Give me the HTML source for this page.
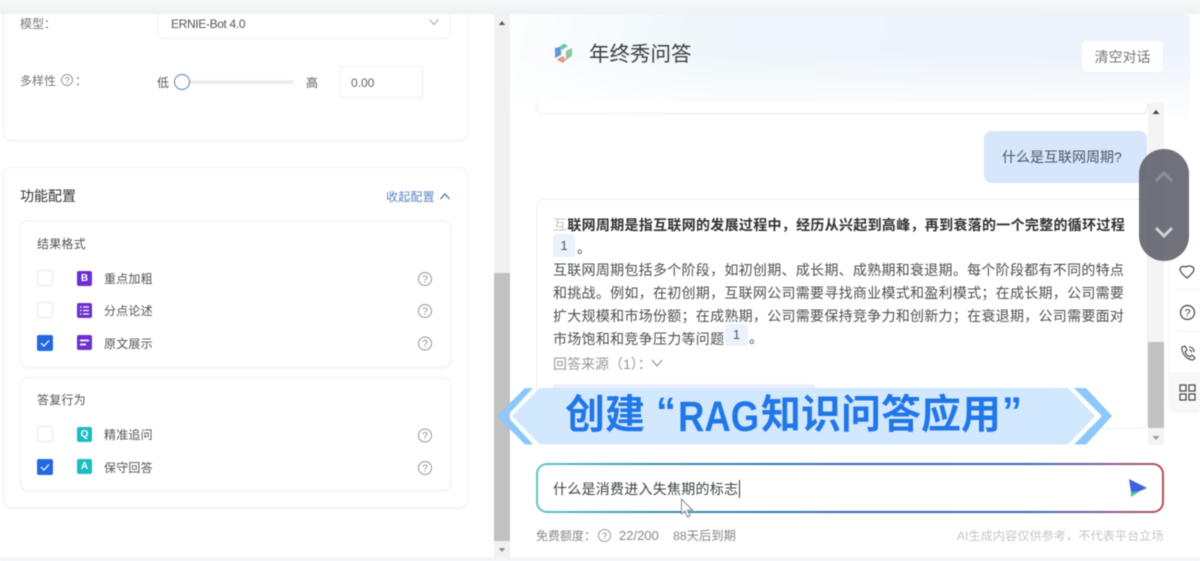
<!DOCTYPE html>
<html><head><meta charset="utf-8"><style>
html,body{margin:0;padding:0;background:#fff}
body{width:1200px;height:561px;overflow:hidden;position:relative;background:#fff;font-family:"Liberation Sans","Noto Sans CJK SC",sans-serif;color:#555}
#w{position:absolute;left:0;top:0;width:1200px;height:561px;overflow:hidden;filter:blur(.4px)}
.a{position:absolute}
.t{position:absolute;white-space:nowrap;line-height:20px}
.card{position:absolute;background:#fff;border:1px solid #eef0f2;border-radius:8px;box-sizing:border-box;box-shadow:0 1px 2px rgba(0,0,0,.03)}
.cb{position:absolute;left:37px;width:16px;height:16px;box-sizing:border-box;border:1px solid #e8e8e8;border-radius:2px;background:#fff}
.cb.on{background:#2468e0;border-color:#2468e0}
.ic{position:absolute;left:77px;width:15px;height:15px;border-radius:2px;color:#fff;font-size:10px;font-weight:bold;line-height:15px;text-align:center}
.p{background:#6d2fd0}.g{background:#1ebcc0}
.l{font-size:12px;letter-spacing:.2px}
.b{position:absolute;white-space:nowrap;font-size:40px;line-height:52px;font-weight:bold;color:#2277e8}
</style></head><body><div id="w">

<div class="card" style="left:3px;top:-20px;width:465px;height:161px"></div>
<div class="a" style="left:0;top:0;width:1200px;height:14px;background:linear-gradient(180deg,#f6f7f8,#f1f2f4)"></div>
<div class="a" style="left:0;top:557px;width:1200px;height:4px;background:#f4f5f6"></div>
<div class="a" style="left:157px;top:14px;width:294px;height:25px;box-sizing:border-box;border:1px solid #eef0f2;border-top:0;border-radius:0 0 5px 5px;background:#fff"></div>
<div class="t" style="left:20px;top:14px;font-size:12px;color:#777">模型：</div>
<div class="t" style="left:171px;top:14px;font-size:12px;letter-spacing:-.35px;color:#555">ERNIE-Bot 4.0</div>
<svg class="a" style="left:428px;top:18px" width="12" height="9"><path d="M1.500 1.500L6 6.500L10.500 1.500" fill="none" stroke="#aaa" stroke-width="1"/></svg>
<div class="t" style="left:20px;top:71px;font-size:12px;color:#777">多样性</div>
<svg class="a" style="left:60px;top:73px" width="14" height="14"><circle cx="7" cy="7" r="5.500" fill="none" stroke="#999"/><text x="7" y="10.500" font-size="9" fill="#888" text-anchor="middle" font-family="Liberation Sans">?</text></svg>
<div class="t" style="left:75px;top:71px;font-size:12px;color:#777">：</div>
<div class="t" style="left:157px;top:73px;font-size:12px;color:#555">低</div>
<div class="a" style="left:182px;top:80px;width:112px;height:4px;border-radius:2px;background:#eceef0"></div>
<div class="a" style="left:174px;top:74px;width:16px;height:16px;box-sizing:border-box;border:1.500px solid #5b7cae;border-radius:50%;background:#fff"></div>
<div class="t" style="left:306px;top:73px;font-size:12px;color:#555">高</div>
<div class="a" style="left:339px;top:66px;width:84px;height:32px;box-sizing:border-box;border:1px solid #eceef0;border-radius:3px"></div>
<div class="t" style="left:351px;top:73px;font-size:12px;color:#666">0.00</div>

<div class="card" style="left:3px;top:167px;width:465px;height:341px"></div>
<div class="t" style="left:20px;top:186px;font-size:14px;color:#333">功能配置</div>
<div class="t" style="left:386px;top:187px;font-size:12px;letter-spacing:.2px;color:#5a84c4">收起配置</div>
<svg class="a" style="left:439px;top:192px" width="12" height="9"><path d="M1.500 7L6 2L10.500 7" fill="none" stroke="#4a74b4" stroke-width="1.300"/></svg>

<div class="card" style="left:20px;top:220px;width:431px;height:148px"></div>
<div class="t l" style="left:37px;top:234px;color:#555">结果格式</div>
<div class="cb" style="top:270px"></div><div class="ic p" style="top:271px">B</div><div class="t l" style="left:104px;top:269px">重点加粗</div>
<div class="cb" style="top:302px"></div>
<div class="ic p" style="top:303px"><svg width="15" height="15" style="display:block"><path d="M3 4h1.500M3 7.500h1.500M3 11h1.500M6 4h6M6 7.500h6M6 11h6" stroke="#fff" stroke-width="1.300"/></svg></div><div class="t l" style="left:104px;top:301px">分点论述</div>
<div class="cb on" style="top:335px"><svg width="14" height="14" style="display:block"><path d="M3 7l3 3l5-5.500" fill="none" stroke="#fff" stroke-width="1.200"/></svg></div>
<div class="ic p" style="top:335px"><svg width="15" height="15" style="display:block"><path d="M3 5.500h9M3 9.500h6" stroke="#fff" stroke-width="1.800"/></svg></div><div class="t l" style="left:104px;top:334px">原文展示</div>

<div class="card" style="left:20px;top:377px;width:431px;height:114px"></div>
<div class="t l" style="left:37px;top:390px;color:#555">答复行为</div>
<div class="cb" style="top:426px"></div><div class="ic g" style="top:427px">Q</div><div class="t l" style="left:104px;top:425px">精准追问</div>
<div class="cb on" style="top:459px"><svg width="14" height="14" style="display:block"><path d="M3 7l3 3l5-5.500" fill="none" stroke="#fff" stroke-width="1.200"/></svg></div>
<div class="ic g" style="top:459px">A</div><div class="t l" style="left:104px;top:458px">保守回答</div>

<svg class="a" style="left:417px;top:271px" width="16" height="205">
<g fill="none" stroke="#999"><circle cx="8" cy="8" r="6.500"/><circle cx="8" cy="40" r="6.500"/><circle cx="8" cy="72.500" r="6.500"/><circle cx="8" cy="164.500" r="6.500"/><circle cx="8" cy="197" r="6.500"/></g>
<g font-size="10" fill="#888" text-anchor="middle" font-family="Liberation Sans"><text x="8" y="11.500">?</text><text x="8" y="43.500">?</text><text x="8" y="76">?</text><text x="8" y="168">?</text><text x="8" y="200.500">?</text></g></svg>

<div class="a" style="left:494px;top:14px;width:16px;height:543px;background:#f1f1f1"></div>
<div class="a" style="left:494px;top:273px;width:16px;height:268px;background:#c1c1c1"></div>
<svg class="a" style="left:494px;top:14px" width="16" height="543"><path d="M5 11h6l-3-4z" fill="#555"/><path d="M5 534h6l-3 4z" fill="#888"/></svg>

<div class="a" style="left:510px;top:14px;width:690px;height:543px;background:#fff"></div>
<div class="a" style="left:510px;top:14px;width:680px;height:110px;background:linear-gradient(100deg,#fdfefe 0%,#eff7fb 28%,#edf4fc 70%,#eef3fd 100%);-webkit-mask-image:linear-gradient(180deg,#000 35%,transparent 100%);mask-image:linear-gradient(180deg,#000 35%,transparent 100%);border-radius:6px 6px 0 0"></div>

<svg class="a" style="left:553px;top:42px" width="21" height="22" viewBox="0 0 21 22">
<path d="M6 5L11 1.500L15 4L9 8z" fill="#6fc8a8"/>
<path d="M13 9L19 6V14L13 18z" fill="#8cc89c"/>
<path d="M2 6L7 5L8 8V13L2 16z" fill="#5f96e0"/>
<path d="M5 16.500L10 14L13 18L10 21L4 18z" fill="#e89a82"/></svg>
<div class="t" style="left:589px;top:43px;font-size:20.500px;line-height:24px;color:#3a3d42">年终秀问答</div>
<div class="a" style="left:1081px;top:40px;width:83px;height:33px;box-sizing:border-box;background:#fff;border:1px solid #f0f1f3;border-radius:5px;font-size:14px;line-height:32px;text-align:center;color:#777">清空对话</div>

<div class="a" style="left:536px;top:102px;width:612px;height:12px;box-sizing:border-box;background:#fff;border:1px solid #eceef1;border-top:0;border-radius:0 0 7px 7px"></div>

<div class="a" style="left:1148px;top:103px;width:16px;height:342px;background:#f4f4f4"></div>
<div class="a" style="left:1148px;top:342px;width:16px;height:86px;background:#c1c1c1"></div>
<svg class="a" style="left:1148px;top:103px" width="16" height="342"><path d="M4.500 11h7l-3.500-4z" fill="#444"/><path d="M4.500 333h7l-3.500 4z" fill="#999"/></svg>

<div class="a" style="left:984px;top:131px;width:163px;height:52px;background:#d7e6fb;border-radius:8px;font-size:14px;line-height:52px;box-sizing:border-box;padding-left:18px;color:#4b5563;white-space:nowrap">什么是互联网周期?</div>

<div class="a" style="left:536px;top:199px;width:612px;height:230px;box-sizing:border-box;background:#fff;border:1px solid #eceef1;border-radius:8px"></div>
<div class="t" style="left:553px;top:215px;font-size:14px;font-weight:bold;color:#2f3136;letter-spacing:.3px"><span style="color:#c4c6ca;font-weight:normal">互</span>联网周期是指互联网的发展过程中，经历从兴起到高峰，再到衰落的一个完整的循环过程</div>
<div class="a" style="left:553px;top:234px;width:22px;height:23px;background:#eaf2fc;border-radius:3px;font-size:13px;line-height:23px;text-align:center;color:#555">1</div>
<div class="t" style="left:577px;top:238px;font-size:14px;color:#444">。</div>
<div class="t" style="left:553px;top:259px;font-size:14px;line-height:23px;letter-spacing:.28px;color:#4c4f55">互联网周期包括多个阶段，如初创期、成长期、成熟期和衰退期。每个阶段都有不同的特点<br>和挑战。例如，在初创期，互联网公司需要寻找商业模式和盈利模式；在成长期，公司需要<br>扩大规模和市场份额；在成熟期，公司需要保持竞争力和创新力；在衰退期，公司需要面对<br>市场饱和和竞争压力等问题</div>
<div class="a" style="left:725px;top:324px;width:23px;height:22px;background:#eaf2fc;border-radius:3px;font-size:13px;line-height:22px;text-align:center;color:#555">1</div>
<div class="t" style="left:749px;top:328px;font-size:14px;color:#444">。</div>
<div class="t" style="left:553px;top:354px;font-size:14px;color:#999">回答来源（1）：</div>
<svg class="a" style="left:650px;top:358px" width="14" height="10"><path d="M2 2l5 6l5-6" fill="none" stroke="#888" stroke-width="1"/></svg>
<div class="a" style="left:553px;top:384px;width:262px;height:10px;background:#eceefb;border-radius:3px 3px 0 0"></div>

<svg class="a" style="left:490px;top:388px" width="630" height="57" viewBox="0 0 630 57">
<polygon points="35,0 43,0 17,28 43,56.500 35,56.500 7,28" fill="#8cc8fb"/>
<polygon points="50,0 578,0 605,28 578,56.500 50,56.500 22,28" fill="#d2e8fe"/>
<polygon points="584,0 596,0 622,28 596,56.500 584,56.500 612,28" fill="#8cc8fb"/>
</svg>
<div class="b" style="left:565px;top:389px">创建</div>
<div class="b" style="left:656px;top:386px">“</div>
<div class="b" style="left:678px;top:391px;font-size:43px;transform:scaleX(.85);transform-origin:0 50%">RAG</div>
<div class="b" style="left:761px;top:389px">知识问答应用</div>
<div class="b" style="left:1002px;top:386px">”</div>

<div class="a" style="left:536px;top:463px;width:628px;height:50px;box-sizing:border-box;border-radius:11px;padding:2px;background:linear-gradient(90deg,#62c7c0 0%,#3f8fb8 18%,#2f68b4 50%,#3567b8 78%,#8a5c92 92%,#b9504f 100%)"><div style="width:100%;height:100%;background:#fff;border-radius:9px"></div></div>
<div class="t" style="left:553px;top:479px;font-size:14px;letter-spacing:.25px;color:#3f4247">什么是消费进入失焦期的标志</div>
<div class="a" style="left:739px;top:480px;width:1px;height:18px;background:#333"></div>
<svg class="a" style="left:1127px;top:477px" width="22" height="22"><path d="M4 12L13 14L4 20z" fill="#45c0a0"/><path d="M2 2L20 11L13 14L4 15z" fill="#3f62e0"/></svg>
<svg class="a" style="left:680px;top:498px" width="16" height="22"><path d="M1.500 1v15l3.500-3l2.500 6l2.500-1l-2.500-6h5z" fill="#fff" stroke="#8a8a8a" stroke-width="1"/></svg>

<div class="t" style="left:536px;top:526px;font-size:12px;color:#888">免费额度：</div>
<svg class="a" style="left:597px;top:528px" width="15" height="15"><circle cx="7.500" cy="7.500" r="6" fill="none" stroke="#999"/><text x="7.500" y="11" font-size="9" fill="#888" text-anchor="middle" font-family="Liberation Sans">?</text></svg>
<div class="t" style="left:619px;top:526px;font-size:13px;color:#888">22/200</div>
<div class="t" style="left:673px;top:526px;font-size:12.300px;color:#888">88天后到期</div>
<div class="t" style="left:957px;top:526px;font-size:12.200px;color:#c4c6ca">AI生成内容仅供参考，不代表平台立场</div>

<div class="a" style="left:1170px;top:248px;width:30px;height:162px;background:#fff;border-radius:6px 0 0 6px;box-shadow:0 1px 5px rgba(0,0,0,.08)"></div>
<div class="a" style="left:1170px;top:372px;width:30px;height:38px;background:#f8f8f9;border-radius:0 0 0 6px"></div>
<div class="a" style="left:1177px;top:289px;width:23px;height:1px;background:#eee"></div>
<div class="a" style="left:1177px;top:331px;width:23px;height:1px;background:#eee"></div>
<svg class="a" style="left:1178px;top:263px" width="18" height="18"><path d="M2 6c1-3 4-3 6-2c3-2 7-1 8 2c0 2-2 5-7 9c-5-4-7-7-7-9z" fill="none" stroke="#444" stroke-width="1.200"/></svg>
<svg class="a" style="left:1179px;top:304px" width="17" height="17"><circle cx="8.500" cy="8.500" r="7" fill="none" stroke="#444" stroke-width="1.200"/><text x="8.500" y="12.500" font-size="11" fill="#444" text-anchor="middle" font-family="Liberation Sans">?</text></svg>
<svg class="a" style="left:1180px;top:345px" width="16" height="17"><path d="M2 2l3-1l2 4l-2 2c1 2 3 4 5 5l2-2l3 3l-2 2c-6 0-12-7-11-13zM9 2c3 0 5 2 5 5M9 5c1.500 0 2.500 1 2.500 2.500" fill="none" stroke="#444" stroke-width="1.100"/></svg>
<svg class="a" style="left:1179px;top:384px" width="17" height="17" fill="none" stroke="#444" stroke-width="1.200"><rect x="1" y="1" width="6" height="6"/><rect x="10" y="1" width="6" height="6"/><rect x="1" y="10" width="6" height="6"/><rect x="10" y="10" width="6" height="6"/></svg>

<div class="a" style="left:1139px;top:149px;width:50px;height:112px;border-radius:25px;background:rgba(96,98,108,.9)"></div>
<svg class="a" style="left:1153px;top:170px" width="22" height="14"><path d="M3 11L11 3L19 11" fill="none" stroke="#8f9096" stroke-width="3"/></svg>
<svg class="a" style="left:1153px;top:225px" width="22" height="14"><path d="M3 3L11 11L19 3" fill="none" stroke="#d2d3d6" stroke-width="3"/></svg>
</div></body></html>
